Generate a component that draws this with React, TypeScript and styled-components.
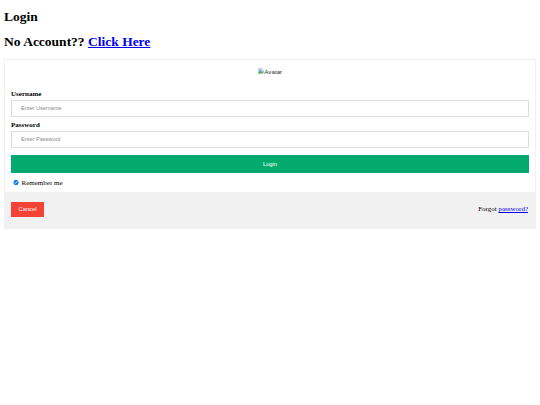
import React from 'react';
import styled, { createGlobalStyle } from 'styled-components';

const GlobalStyle = createGlobalStyle`
  html, body {
    background: #ffffff;
  }
  body {
    margin: 4px;
    font-family: 'Liberation Serif', 'Times New Roman', serif;
    color: #000000;
  }
  * {
    box-sizing: border-box;
  }
`;

const Heading = styled.h2<{ $first?: boolean }>`
  font-size: 13.5px;
  line-height: 15px;
  font-weight: bold;
  margin: ${(p) => (p.$first ? '5px 0 10px' : '0 0 9.5px')};

  a {
    color: #0000ee;
    text-decoration: underline;
  }
`;

const LoginForm = styled.form`
  border: 1.5px solid #f1f1f1;
  margin: 0;
`;

const ImgContainer = styled.div`
  height: 22px;
  display: flex;
  align-items: center;
  justify-content: center;
  padding-top: 2px;
`;

const BrokenImage = styled.span`
  display: inline-flex;
  align-items: center;
  gap: 0.5px;
  font-family: 'Liberation Sans', Arial, sans-serif;
  font-size: 6.2px;
  color: #333333;

  svg {
    display: block;
  }
`;

const Container = styled.div<{ $grey?: boolean }>`
  display: flex;
  flex-direction: ${(p) => (p.$grey ? 'row' : 'column')};
  align-items: ${(p) => (p.$grey ? 'center' : 'stretch')};
  justify-content: space-between;
  padding: ${(p) => (p.$grey ? '10px 7px 11px 6px' : '8px 6px 5px')};
  background: ${(p) => (p.$grey ? '#f1f1f1' : 'transparent')};
`;

const FieldLabel = styled.label`
  display: block;
  font-size: 7px;
  line-height: 8px;
  font-weight: bold;
`;

const TextInput = styled.input`
  display: block;
  width: 100%;
  height: 17px;
  margin: 2px 0 4px;
  padding: 0 9px;
  border: 1px solid #dddddd;
  font-family: 'Liberation Sans', Arial, sans-serif;
  font-size: 5.6px;
  outline: none;

  &::placeholder {
    color: #8a8a8a;
  }
`;

const SubmitButton = styled.button`
  display: block;
  width: 100%;
  height: 18px;
  margin: 3px 0 6px;
  padding: 0;
  border: none;
  background: #04aa6d;
  color: #ffffff;
  font-family: 'Liberation Sans', Arial, sans-serif;
  font-size: 5.8px;
  cursor: pointer;
`;

const RememberRow = styled.label`
  display: flex;
  align-items: center;
  gap: 3px;
  font-size: 7px;
  line-height: 8px;
  padding-left: 2px;

  input {
    width: 5.5px;
    height: 5.5px;
    margin: 0;
  }
`;

const CancelButton = styled.button`
  width: 33px;
  height: 15px;
  padding: 0;
  border: none;
  background: #f44336;
  color: #ffffff;
  font-family: 'Liberation Sans', Arial, sans-serif;
  font-size: 5.8px;
  cursor: pointer;
`;

const Forgot = styled.span`
  font-size: 7px;
  line-height: 8px;

  a {
    color: #0000ee;
  }
`;

const AvatarIcon = () => (
  <svg width="6" height="7" viewBox="0 0 16 18">
    <path d="M1 1h10l4 4v9l-3 -2-3 3-3-2-3 3-2-1z" fill="#ffffff" stroke="#9aa0a6" strokeWidth="1.2" />
    <path d="M2 3h8v4h4v4H2z" fill="#7fb2e5" />
    <path d="M2 11l4-3 4 3 4-2v4l-2-1-3 3-3-2-3 3-1-1z" fill="#4caf50" />
  </svg>
);

export default function App() {
  return (
    <>
      <GlobalStyle />
      <Heading $first>Login</Heading>
      <Heading>
        No Account?? <a href="#">Click Here</a>
      </Heading>
      <LoginForm onSubmit={(e) => e.preventDefault()}>
        <ImgContainer>
          <BrokenImage>
            <AvatarIcon />
            Avatar
          </BrokenImage>
        </ImgContainer>
        <Container>
          <FieldLabel htmlFor="uname">Username</FieldLabel>
          <TextInput id="uname" type="text" placeholder="Enter Username" />
          <FieldLabel htmlFor="psw">Password</FieldLabel>
          <TextInput id="psw" type="password" placeholder="Enter Password" />
          <SubmitButton type="submit">Login</SubmitButton>
          <RememberRow>
            <input type="checkbox" defaultChecked />
            Remember me
          </RememberRow>
        </Container>
        <Container $grey>
          <CancelButton type="button">Cancel</CancelButton>
          <Forgot>
            Forgot <a href="#">password?</a>
          </Forgot>
        </Container>
      </LoginForm>
    </>
  );
}
